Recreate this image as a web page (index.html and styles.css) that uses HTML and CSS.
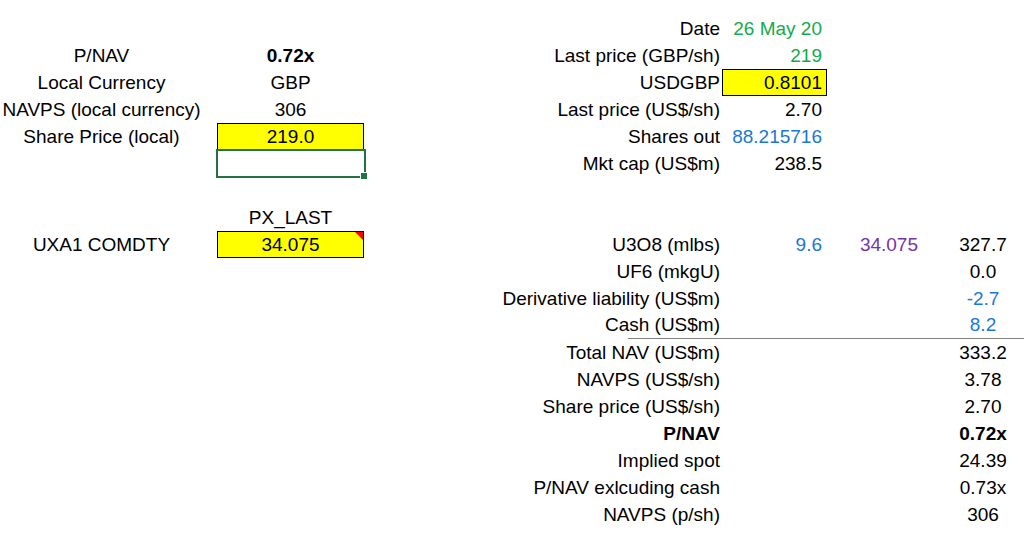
FILE: index.html
```html
<!DOCTYPE html>
<html>
<head>
<meta charset="utf-8">
<link rel="stylesheet" href="styles.css">
</head>
<body>
<div class="sheet">
  <div class="row">
    <div class="c a"></div><div class="c gap"></div><div class="c b"></div><div class="c spacer"></div>
    <div class="c lbl"><span>Date</span></div><div class="c e green">26 May 20</div><div class="c f"></div><div class="c g"></div>
  </div>
  <div class="row">
    <div class="c a">P/NAV</div><div class="c gap"></div><div class="c b bold">0.72x</div><div class="c spacer"></div>
    <div class="c lbl"><span>Last price (GBP/sh)</span></div><div class="c e green">219</div><div class="c f"></div><div class="c g"></div>
  </div>
  <div class="row">
    <div class="c a">Local Currency</div><div class="c gap"></div><div class="c b">GBP</div><div class="c spacer"></div>
    <div class="c lbl"><span>USDGBP</span></div><div class="c e input">0.8101</div><div class="c f"></div><div class="c g"></div>
  </div>
  <div class="row">
    <div class="c a">NAVPS (local currency)</div><div class="c gap"></div><div class="c b">306</div><div class="c spacer"></div>
    <div class="c lbl"><span>Last price (US$/sh)</span></div><div class="c e">2.70</div><div class="c f"></div><div class="c g"></div>
  </div>
  <div class="row">
    <div class="c a">Share Price (local)</div><div class="c gap"></div><div class="c b input">219.0</div><div class="c spacer"></div>
    <div class="c lbl"><span>Shares out</span></div><div class="c e blue">88.215716</div><div class="c f"></div><div class="c g"></div>
  </div>
  <div class="row">
    <div class="c a"></div><div class="c gap"></div><div class="c b selected"></div><div class="c spacer"></div>
    <div class="c lbl"><span>Mkt cap (US$m)</span></div><div class="c e">238.5</div><div class="c f"></div><div class="c g"></div>
  </div>
  <div class="row">
    <div class="c a"></div><div class="c gap"></div><div class="c b"></div><div class="c spacer"></div>
    <div class="c lbl"></div><div class="c e"></div><div class="c f"></div><div class="c g"></div>
  </div>
  <div class="row">
    <div class="c a"></div><div class="c gap"></div><div class="c b">PX_LAST</div><div class="c spacer"></div>
    <div class="c lbl"></div><div class="c e"></div><div class="c f"></div><div class="c g"></div>
  </div>
  <div class="row">
    <div class="c a">UXA1 COMDTY</div><div class="c gap"></div><div class="c b input comment">34.075</div><div class="c spacer"></div>
    <div class="c lbl"><span>U3O8 (mlbs)</span></div><div class="c e blue">9.6</div><div class="c f purple">34.075</div><div class="c g">327.7</div>
  </div>
  <div class="row">
    <div class="c a"></div><div class="c gap"></div><div class="c b"></div><div class="c spacer"></div>
    <div class="c lbl"><span>UF6 (mkgU)</span></div><div class="c e"></div><div class="c f"></div><div class="c g">0.0</div>
  </div>
  <div class="row">
    <div class="c a"></div><div class="c gap"></div><div class="c b"></div><div class="c spacer"></div>
    <div class="c lbl"><span>Derivative liability (US$m)</span></div><div class="c e"></div><div class="c f"></div><div class="c g blue">-2.7</div>
  </div>
  <div class="row">
    <div class="c a"></div><div class="c gap"></div><div class="c b"></div><div class="c spacer"></div>
    <div class="c lbl rule"><span>Cash (US$m)</span></div><div class="c e rule"></div><div class="c f rule"></div><div class="c g rule blue">8.2</div>
  </div>
  <div class="row">
    <div class="c a"></div><div class="c gap"></div><div class="c b"></div><div class="c spacer"></div>
    <div class="c lbl"><span>Total NAV (US$m)</span></div><div class="c e"></div><div class="c f"></div><div class="c g">333.2</div>
  </div>
  <div class="row">
    <div class="c a"></div><div class="c gap"></div><div class="c b"></div><div class="c spacer"></div>
    <div class="c lbl"><span>NAVPS (US$/sh)</span></div><div class="c e"></div><div class="c f"></div><div class="c g">3.78</div>
  </div>
  <div class="row">
    <div class="c a"></div><div class="c gap"></div><div class="c b"></div><div class="c spacer"></div>
    <div class="c lbl"><span>Share price (US$/sh)</span></div><div class="c e"></div><div class="c f"></div><div class="c g">2.70</div>
  </div>
  <div class="row">
    <div class="c a"></div><div class="c gap"></div><div class="c b"></div><div class="c spacer"></div>
    <div class="c lbl bold"><span>P/NAV</span></div><div class="c e"></div><div class="c f"></div><div class="c g bold">0.72x</div>
  </div>
  <div class="row">
    <div class="c a"></div><div class="c gap"></div><div class="c b"></div><div class="c spacer"></div>
    <div class="c lbl"><span>Implied spot</span></div><div class="c e"></div><div class="c f"></div><div class="c g">24.39</div>
  </div>
  <div class="row">
    <div class="c a"></div><div class="c gap"></div><div class="c b"></div><div class="c spacer"></div>
    <div class="c lbl"><span>P/NAV exlcuding cash</span></div><div class="c e"></div><div class="c f"></div><div class="c g">0.73x</div>
  </div>
  <div class="row">
    <div class="c a"></div><div class="c gap"></div><div class="c b"></div><div class="c spacer"></div>
    <div class="c lbl"><span>NAVPS (p/sh)</span></div><div class="c e"></div><div class="c f"></div><div class="c g">306</div>
  </div>
</div>
</body>
</html>
```

FILE: styles.css
```css
html, body {
  margin: 0;
  padding: 0;
  background: #ffffff;
  overflow: hidden;
}

.sheet {
  width: 1024px;
  padding-top: 15px;
  font-family: "Liberation Sans", Arial, sans-serif;
  font-size: 19px;
  color: #000000;
}

.row {
  display: grid;
  grid-template-columns: 203px 14px 147px 264px 94px 105px 95px 102px;
  height: 27px;
}

.c {
  box-sizing: border-box;
  height: 27px;
  line-height: 27px;
  white-space: nowrap;
  position: relative;
}

.a {
  text-align: center;
}

.b {
  text-align: center;
}

.lbl {
  display: flex;
  justify-content: flex-end;
  padding-right: 2px;
}

.e {
  text-align: right;
  padding-right: 5px;
}

.f {
  text-align: right;
  padding-right: 4px;
}

.g {
  text-align: center;
  padding-left: 20px;
}

.bold {
  font-weight: bold;
}

.green {
  color: #14ab4b;
}

.blue {
  color: #1a78d4;
}

.purple {
  color: #7535a8;
}

.input {
  background: #ffff00;
  border: 1px solid #000000;
  line-height: 25px;
}

.e.input {
  padding-right: 4px;
}

.selected {
  border: 2px solid #217346;
  height: 29px;
  margin: -1px -2px 0 -1px;
}

.selected::after {
  content: "";
  position: absolute;
  right: -4px;
  bottom: -4px;
  width: 6px;
  height: 6px;
  background: #217346;
  border: 1px solid #ffffff;
}

.comment::after {
  content: "";
  position: absolute;
  top: 0;
  right: 0;
  width: 0;
  height: 0;
  border-top: 8px solid #ff0000;
  border-left: 8px solid transparent;
}

.rule {
  border-bottom: 1px solid #808080;
  line-height: 26px;
}
```
